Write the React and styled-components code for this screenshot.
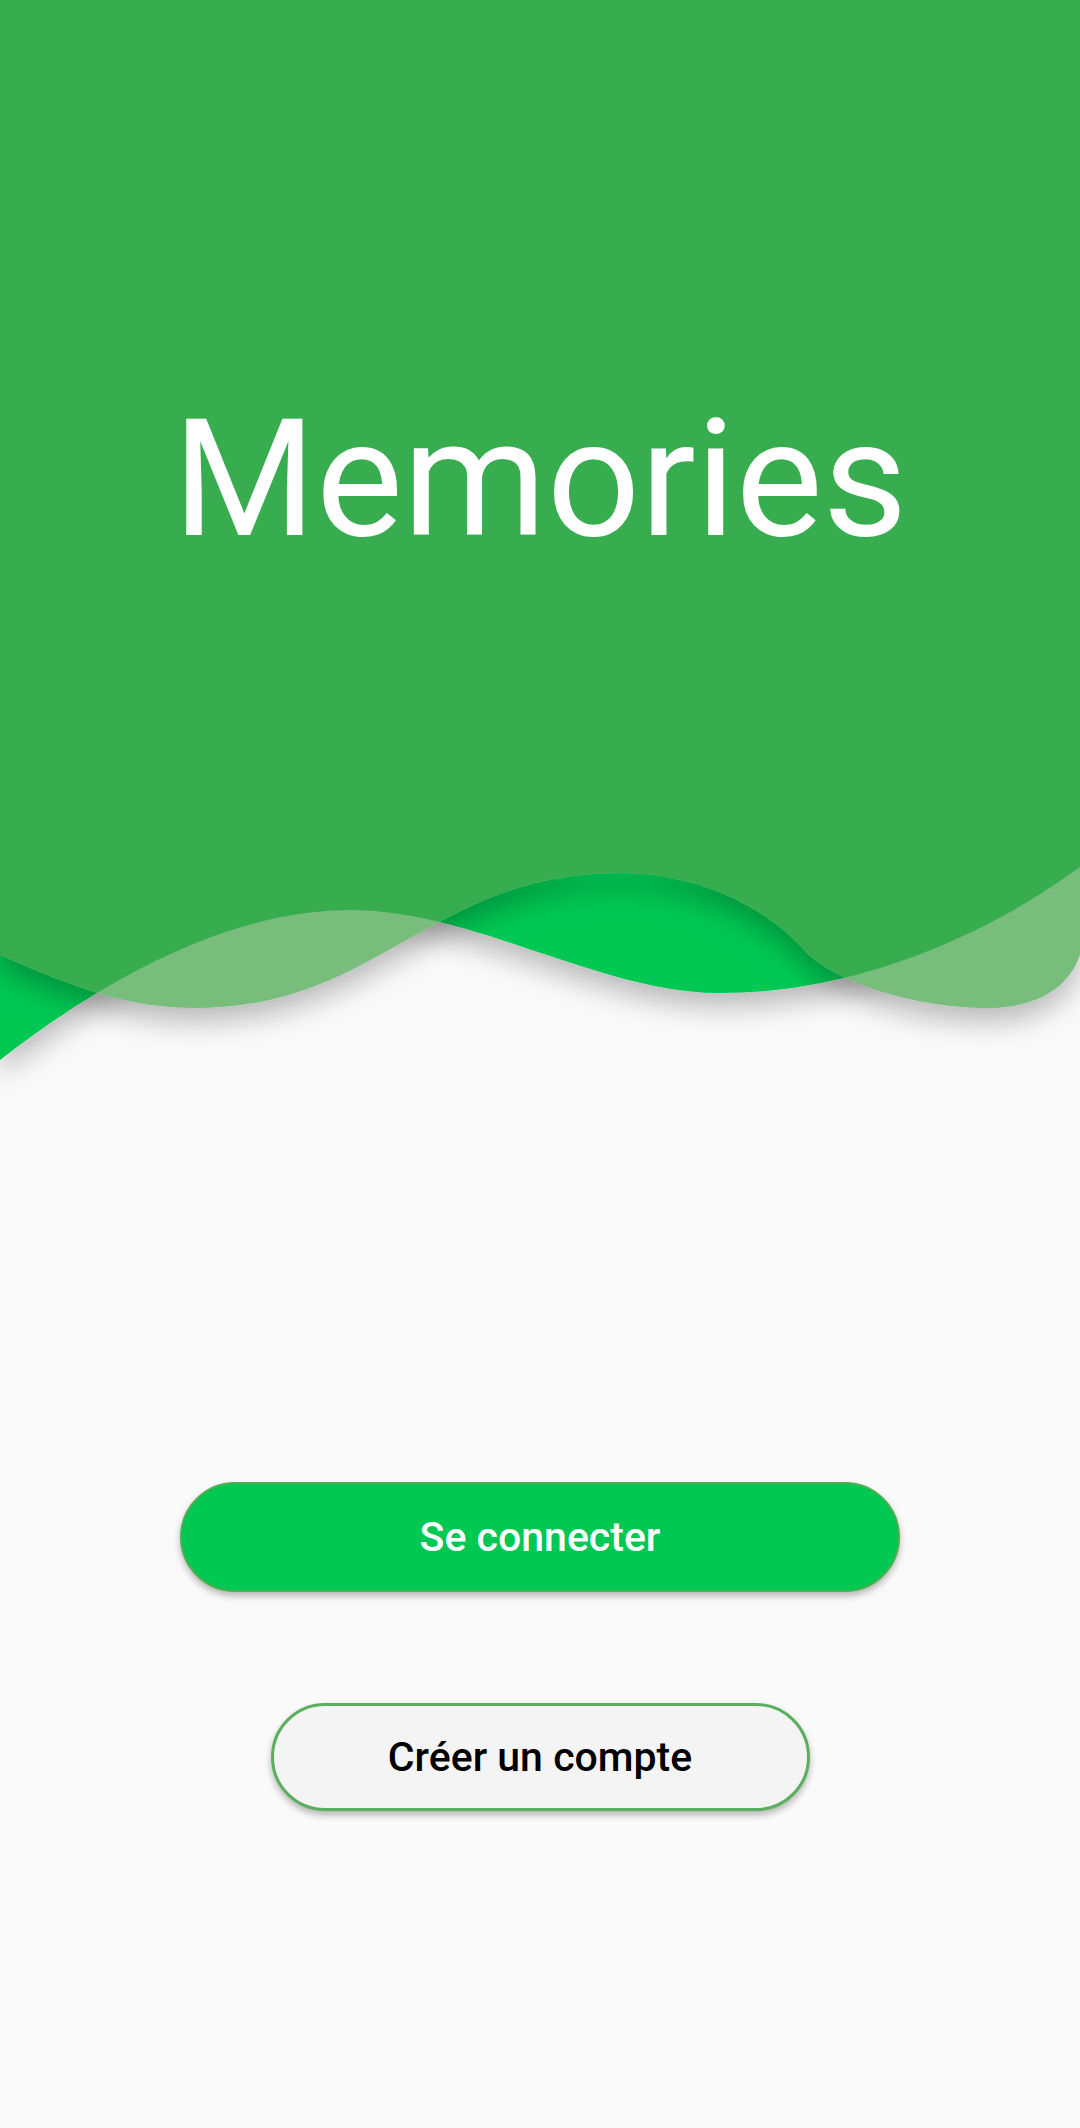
import styled, { createGlobalStyle } from 'styled-components'

const GlobalStyle = createGlobalStyle`
    body {
        margin: 0;
        background: #fafafa;
        font-family: Roboto, "Liberation Sans", sans-serif;
    }
`

const colors = {
    bright: '#00c853',
    dark: '#37ad4f',
    pale: '#78bd7b',
    border: '#4caf50',
}

const Page = styled.div`
    display: flex;
    flex-direction: column;
    min-height: 100vh;
    background: #fafafa;
`

const Hero = styled.header`
    height: 860px;
    box-sizing: border-box;
    padding-top: 397px;
    background: ${colors.dark};
    display: flex;
    justify-content: center;
`

const Title = styled.h1`
    margin: 0;
    color: #ffffff;
    font-family: Roboto, "Liberation Sans", sans-serif;
    font-weight: 400;
    font-size: 164px;
    line-height: 1;
`

const WaveSvg = styled.svg`
    display: block;
    width: 1080px;
    height: 260px;
`

const Actions = styled.main`
    display: flex;
    flex-direction: column;
    align-items: center;
    gap: 111px;
    padding-top: 362px;
`

const PillButton = styled.button`
    box-sizing: border-box;
    width: ${(props) => props.$width}px;
    height: ${(props) => props.$height}px;
    border-radius: 56px;
    font-family: Roboto, "Liberation Sans", sans-serif;
    font-weight: 500;
    font-size: 41px;
    cursor: pointer;
    box-shadow: 0 4px 7px rgba(0, 0, 0, 0.28);
    background: ${(props) => (props.$primary ? colors.bright : '#f4f4f4')};
    color: ${(props) => (props.$primary ? '#ffffff' : '#000000')};
    border: ${(props) => (props.$primary ? `2px solid ${colors.border}` : `3px solid #5aaf5e`)};
`

const brightPath =
    'M0 860 L0 1060 C90 990 220 910 350 910 C475 910 600 993 720 993 C850 993 980 940 1080 867 L1080 860 Z'
const topPath =
    'M0 860 L0 955 C80 990 130 1008 195 1008 C380 1008 430 873 620 873 C690 873 760 900 807 953 C840 985 920 1008 987 1008 C1040 1008 1070 985 1080 955 L1080 860 Z'

function Wave() {
    return (
        <WaveSvg viewBox="0 860 1080 260">
            <defs>
                <filter id="waveShadow" x="-5%" y="-10%" width="110%" height="180%">
                    <feDropShadow dx="0" dy="14" stdDeviation="14" floodColor="#000" floodOpacity="0.26" />
                </filter>
                <clipPath id="brightClip">
                    <path d={brightPath} />
                </clipPath>
            </defs>
            <path d={brightPath} fill={colors.bright} filter="url(#waveShadow)" />
            <g filter="url(#waveShadow)">
                <path d={topPath} fill={colors.pale} />
                <path d={topPath} fill={colors.dark} clipPath="url(#brightClip)" />
            </g>
        </WaveSvg>
    )
}

function App() {
    return (
        <Page>
            <GlobalStyle />
            <Hero>
                <Title>Memories</Title>
            </Hero>
            <Wave />
            <Actions>
                <PillButton $primary $width={720} $height={110}>Se connecter</PillButton>
                <PillButton $width={539} $height={108}>Créer un compte</PillButton>
            </Actions>
        </Page>
    )
}

export default App
